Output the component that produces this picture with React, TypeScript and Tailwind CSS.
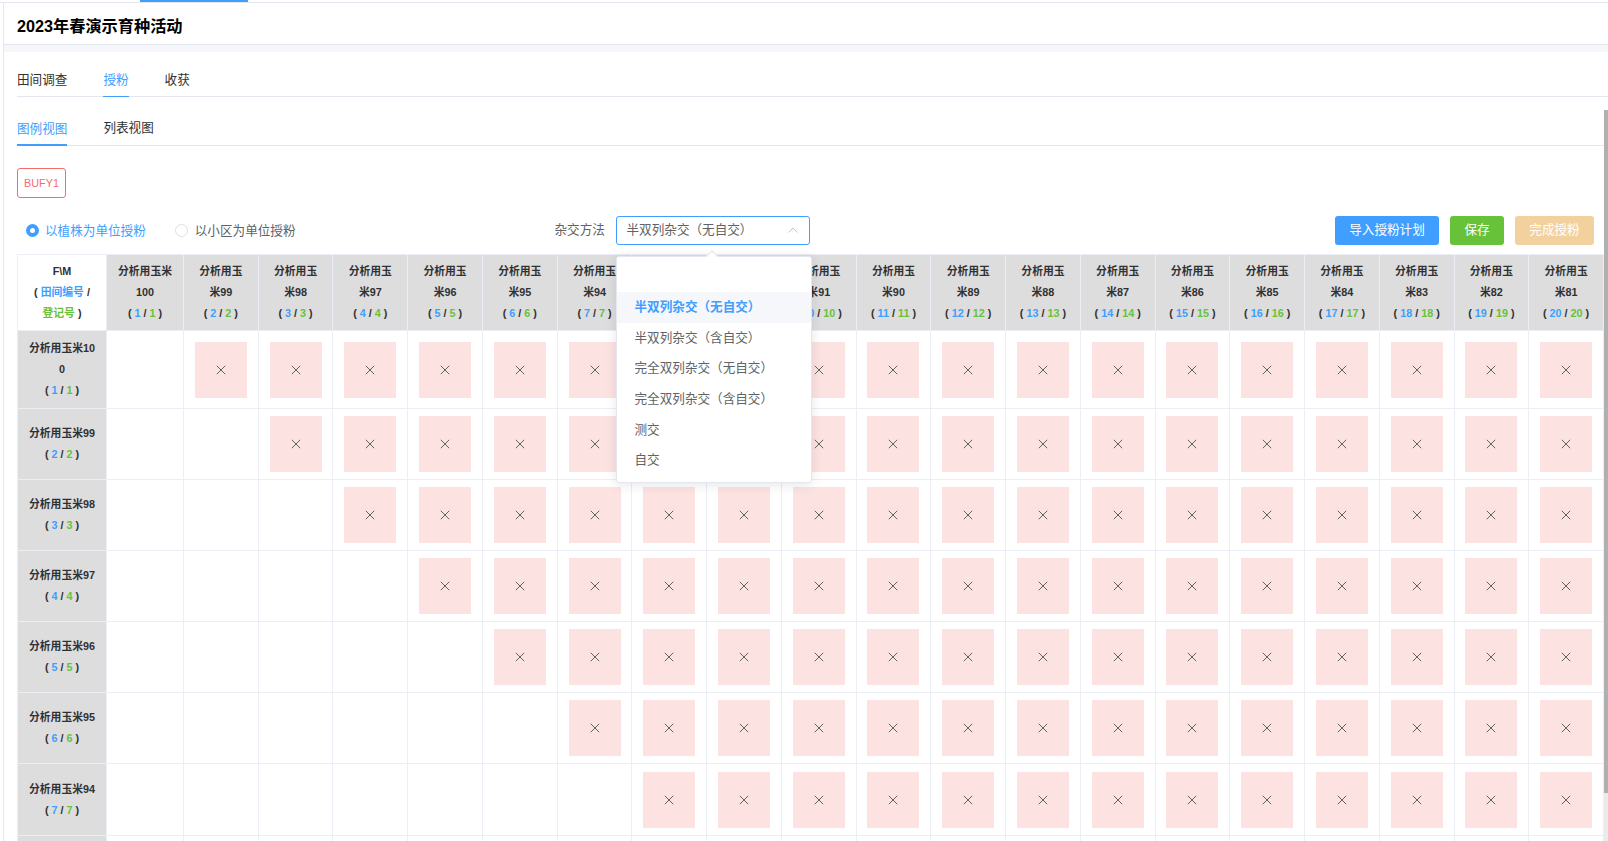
import React from "react";

const names = Array.from({ length: 20 }, (_, i) => `分析用玉米${100 - i}`);
const options = ["半双列杂交（无自交）", "半双列杂交（含自交）", "完全双列杂交（无自交）", "完全双列杂交（含自交）", "测交", "自交"];

function Count({ n }: { n: number }) {
  return (
    <div className="whitespace-nowrap">
      ( <span className="text-[#409eff]">{n}</span> / <span className="text-[#67c23a]">{n}</span> )
    </div>
  );
}

function Cross() {
  return (
    <svg width="10" height="10" viewBox="0 0 10 10" fill="none" stroke="#606266" strokeWidth="1">
      <path d="M0.8 0.8 L9.2 9.2 M9.2 0.8 L0.8 9.2" />
    </svg>
  );
}

const headCell = "box-border border-r border-b border-[#ebeef5] bg-[#dddddd] flex flex-col items-center justify-center text-center font-bold text-[#303133] [word-break:break-all] px-[10.5px]";

export default function App() {
  return (
    <div className="relative w-[1608px] h-[841px] overflow-hidden bg-white text-[12.6px] text-[#606266] font-['Liberation_Sans','Noto_Sans_CJK_SC',sans-serif]">
      <div className="h-[3px] border-b border-[#e4e7ed] box-border">
        <div className="ml-[140px] w-[108px] h-[2px] bg-[#409eff]" />
      </div>
      <div className="ml-[3px] border-l border-[#e4e7ed] h-[838px]">
        <div className="h-[42px] box-border border-b border-[#e4e7ed] pl-[13px] pt-[5px] flex items-center text-[16.2px] font-bold text-black">
          2023年春演示育种活动
        </div>
        <div className="h-[7px] bg-[#f5f7fa]" />
        <div className="pl-[13px]">
          <div className="flex gap-[36px] h-[45px] items-end border-b border-[#e4e7ed] text-[#303133]">
            <div className="h-[35px] leading-[38px]">田间调查</div>
            <div className="h-[35px] leading-[38px] text-[#409eff] border-b border-[#409eff] -mb-px box-content">授粉</div>
            <div className="h-[35px] leading-[38px]">收获</div>
          </div>
          <div className="flex gap-[36px] h-[49px] items-end border-b border-[#e4e7ed] text-[#303133]">
            <div className="h-[34px] leading-[34px] text-[#409eff] border-b-2 border-[#409eff] -mb-px box-border">图例视图</div>
            <div className="h-[34px] leading-[34px]">列表视图</div>
          </div>
          <div className="mt-[22px] w-[49px] h-[30px] box-border border border-[#f56c6c] rounded-[3px] text-[#f56c6c] text-[10.8px] flex items-center justify-center">
            BUFY1
          </div>
          <div className="mt-[18px] h-[29px] flex items-center">
            <div className="ml-[9px] pt-[1px] flex items-center gap-[6px] text-[#409eff]">
              <span className="w-[13px] h-[13px] rounded-full bg-[#409eff] flex items-center justify-center">
                <span className="w-[5px] h-[5px] rounded-full bg-white" />
              </span>
              以植株为单位授粉
            </div>
            <div className="ml-[29px] pt-[1px] flex items-center gap-[7px]">
              <span className="w-[13px] h-[13px] box-border rounded-full border border-[#dcdfe6] bg-white" />
              以小区为单位授粉
            </div>
            <div className="ml-[259px] w-[51px] whitespace-nowrap">杂交方法</div>
            <div className="relative ml-[10px] w-[194px] h-[29px] box-border border border-[#409eff] rounded-[3px] flex items-center pl-[10px]">
              半双列杂交（无自交）
              <svg className="absolute right-[11px] top-[10px]" width="10" height="6" viewBox="0 0 10 6" fill="none" stroke="#c0c4cc" strokeWidth="1">
                <path d="M0.5 5.5 L5 1 L9.5 5.5" />
              </svg>
              <div className="absolute z-10 -left-px top-[39px] w-[196px] box-border border border-[#e4e7ed] rounded-[3px] bg-white py-[6px] shadow-[0_2px_12px_rgba(0,0,0,0.1)]">
                <div className="absolute left-[91px] -top-[5px] w-[8px] h-[8px] rotate-45 bg-white border-l border-t border-[#e4e7ed]" />
                <div className="h-[29.3px]" />
                {options.map((o, i) => (
                  <div
                    key={o}
                    className={
                      i === 0
                        ? "h-[30.6px] leading-[30.6px] pl-[18px] bg-[#f5f7fa] text-[#409eff] font-bold whitespace-nowrap"
                        : "h-[30.6px] leading-[30.6px] pl-[18px] whitespace-nowrap"
                    }
                  >
                    {o}
                  </div>
                ))}
              </div>
            </div>
            <div className="ml-auto mr-[14px] flex gap-[11px] text-white">
              <div className="w-[104px] h-[29px] rounded-[3px] bg-[#409eff] flex items-center justify-center">导入授粉计划</div>
              <div className="w-[54px] h-[29px] rounded-[3px] bg-[#67c23a] flex items-center justify-center">保存</div>
              <div className="w-[79px] h-[29px] rounded-[3px] bg-[#f3d19e] flex items-center justify-center">完成授粉</div>
            </div>
          </div>
          <div className="mt-[9px] w-[1587px] box-border border-l border-t border-[#ebeef5] grid grid-cols-[89px_77px_repeat(19,minmax(0,1fr))] grid-rows-[76px_78px_repeat(19,71.1px)] text-[10.8px] leading-[21px]">
            <div className="box-border border-r border-b border-[#ebeef5] bg-white flex flex-col items-center justify-center text-center font-bold text-[#303133]">
              <div>F\M</div>
              <div>( <span className="text-[#409eff]">田间编号</span> /</div>
              <div><span className="text-[#67c23a]">登记号</span> )</div>
            </div>
            {names.map((n, i) => (
              <div key={n} className={headCell}>
                <div>{n}</div>
                <Count n={i + 1} />
              </div>
            ))}
            {names.map((n, r) => (
              <React.Fragment key={n}>
                <div className={headCell}>
                  <div className="w-full">{n}</div>
                  <Count n={r + 1} />
                </div>
                {names.map((m, c) => (
                  <div key={m} className="box-border border-r border-b border-[#ebeef5] flex items-center justify-center">
                    {c > r && (
                      <div className="w-[52px] h-[56px] bg-[#fde2e2] flex items-center justify-center">
                        <Cross />
                      </div>
                    )}
                  </div>
                ))}
              </React.Fragment>
            ))}
          </div>
        </div>
      </div>
      <div className="absolute right-0 top-[110px] bottom-0 w-[4px] bg-[#ebebeb]">
        <div className="h-[683px] bg-[#b0b0b0]" />
      </div>
    </div>
  );
}
